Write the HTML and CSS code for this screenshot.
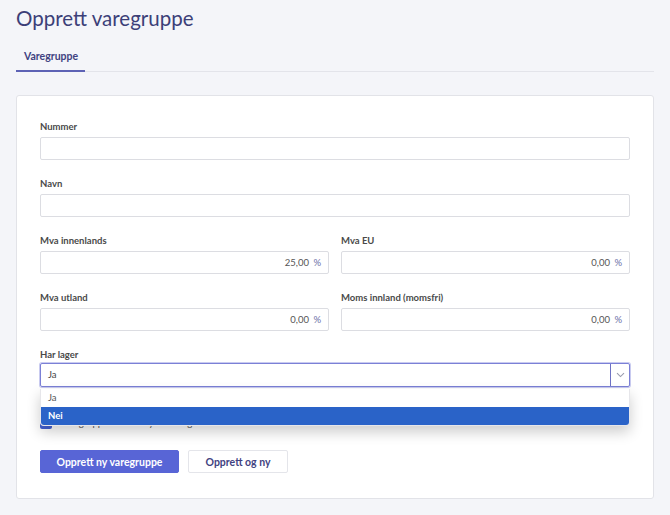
FILE: index.html
```html
<!DOCTYPE html>
<html lang="no">
<head>
    <meta charset="UTF-8">
    <meta name="viewport" content="width=device-width, initial-scale=1.0">
    <title>Opprett varegruppe</title>
    <link rel="stylesheet" href="styles.css">
</head>
<body>

    <h1 class="page-title">Opprett varegruppe</h1>

    <div class="tabs">
        <div class="tab active">Varegruppe</div>
    </div>

    <div class="card">
        <div class="field">
            <label>Nummer</label>
            <div class="input"></div>
        </div>

        <div class="field">
            <label>Navn</label>
            <div class="input"></div>
        </div>

        <div class="row">
            <div class="field">
                <label>Mva innenlands</label>
                <div class="input number">25,00 <span class="unit">%</span></div>
            </div>
            <div class="field">
                <label>Mva EU</label>
                <div class="input number">0,00 <span class="unit">%</span></div>
            </div>
        </div>

        <div class="row">
            <div class="field">
                <label>Mva utland</label>
                <div class="input number">0,00 <span class="unit">%</span></div>
            </div>
            <div class="field">
                <label>Moms innland (momsfri)</label>
                <div class="input number">0,00 <span class="unit">%</span></div>
            </div>
        </div>

        <div class="field select-field">
            <label>Har lager</label>
            <div class="select">
                <span class="select-value">Ja</span>
                <span class="select-arrow">
                    <svg width="9" height="6" viewBox="0 0 9 6"><path d="M1 1.2 L4.5 4.6 L8 1.2" fill="none" stroke="#9a9cae" stroke-width="1.1"/></svg>
                </span>
            </div>
            <!-- åpen nedtrekksliste -->
            <ul class="options">
                <li>Ja</li>
                <li class="selected">Nei</li>
            </ul>
        </div>

        <div class="check-row">
            <span class="checkbox"></span>
            <span class="check-text">Varegruppen kan benyttes i salg</span>
        </div>

        <div class="actions">
            <button class="btn primary">Opprett ny varegruppe</button>
            <button class="btn secondary">Opprett og ny</button>
        </div>
    </div>

</body>
</html>
```

FILE: styles.css
```css
body {
    margin: 0;
    padding: 0 16px;
    background-color: #f4f5f9;
    font-family: Lato, "Open Sans", sans-serif;
    color: #444;
}

.page-title {
    margin: 0;
    padding-top: 5px;
    font-size: 20.5px;
    line-height: 26px;
    font-weight: 400;
    color: #3c3f78;
}

.tabs {
    display: flex;
    margin-top: 11px;
    border-bottom: 1px solid #e3e4ea;
}

.tab {
    padding: 8px 7px 8px 8px;
    font-size: 10.5px;
    line-height: 12px;
    font-weight: 700;
    color: #3f4281;
    margin-bottom: -1px;
}

.tab.active {
    border-bottom: 2px solid #5d62b5;
}

.card {
    margin-top: 23px;
    background-color: white;
    border: 1px solid #e2e3e8;
    border-radius: 3px;
    padding: 24px 23px 25px;
}

.field {
    margin-bottom: 17px;
    flex: 1;
}

.field label {
    display: block;
    font-size: 9.5px;
    line-height: 14px;
    font-weight: 700;
    color: #4a4a4a;
    margin-bottom: 3px;
}

.input {
    height: 21px;
    border: 1px solid #dcdde2;
    border-radius: 2px;
    font-size: 9.5px;
    line-height: 21px;
    color: #555;
    padding: 0 7px;
}

.input.number {
    text-align: right;
}

.unit {
    color: #6a6fa8;
    margin-left: 2px;
}

.row {
    display: flex;
    gap: 12px;
}

.select-field {
    position: relative;
}

.select-field label {
    margin-bottom: 1px;
}

.select {
    display: flex;
    height: 22px;
    border: 1px solid #7b80d6;
    box-shadow: 0 0 0 1px #c9cbf0;
    border-radius: 2px;
    font-size: 9.5px;
    line-height: 22px;
    color: #444;
}

.select-value {
    flex: 1;
    padding: 0 7px;
}

.select-arrow {
    width: 18px;
    border-left: 1px solid #6e72c4;
    display: flex;
    align-items: center;
    justify-content: center;
}

.options {
    position: absolute;
    top: 41px;
    left: 0;
    right: 0;
    margin: 0;
    padding: 0;
    list-style: none;
    background-color: white;
    border: 1px solid #e6e6ea;
    border-top: none;
    border-radius: 0 0 4px 4px;
    box-shadow: 0 6px 14px rgba(0, 0, 0, 0.2);
    overflow: hidden;
    z-index: 2;
    font-size: 9.5px;
}

.options li {
    height: 18px;
    line-height: 18px;
    padding: 0 7px;
    color: #555;
}

.options li.selected {
    background-color: #2a63c8;
    color: white;
    font-weight: 700;
}

.check-row {
    display: flex;
    align-items: center;
    gap: 8px;
    height: 12px;
    font-size: 9.5px;
    line-height: 12px;
    color: #555;
    margin-top: 30px;
}

.checkbox {
    width: 12px;
    height: 12px;
    border-radius: 2px;
    background-color: #4361d2;
}

.actions {
    display: flex;
    gap: 9px;
    margin-top: 21px;
}

.btn {
    height: 23px;
    padding: 0 12px;
    font-family: Lato, "Open Sans", sans-serif;
    font-size: 10.5px;
    font-weight: 700;
    border-radius: 2px;
    cursor: pointer;
}

.btn.primary {
    width: 139px;
    background-color: #5865d6;
    border: 1px solid #5865d6;
    color: white;
}

.btn.secondary {
    width: 100px;
    background-color: white;
    border: 1px solid #e4e5ea;
    color: #3f4281;
}
```
